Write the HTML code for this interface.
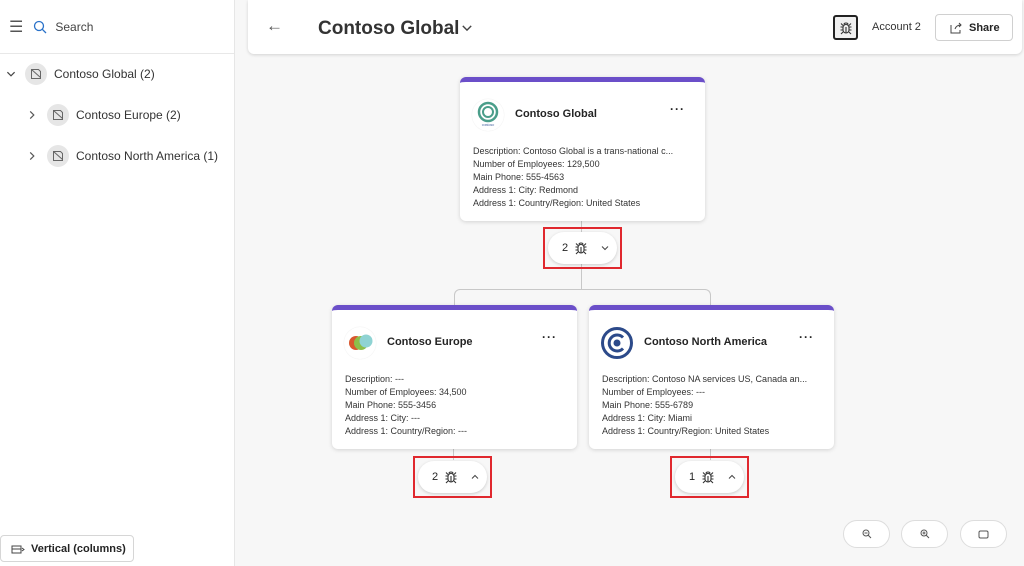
<!DOCTYPE html>
<html><head><meta charset="utf-8"><style>
*{box-sizing:border-box;margin:0;padding:0}
body{width:1024px;height:566px;overflow:hidden;background:#f7f7f7;font-family:"Liberation Sans",sans-serif;color:#242424;position:relative}
.left{position:absolute;left:0;top:0;width:235px;height:566px;background:#fff;border-right:1px solid #e6e6e6}
.lh{height:54px;border-bottom:1px solid #e8e8e8;display:flex;align-items:center;padding-left:9px;font-size:12px;color:#444}
.row{position:absolute;display:flex;align-items:center;font-size:12px;color:#333}
.ic{width:22px;height:22px;border-radius:50%;background:#e6e6e6;display:flex;align-items:center;justify-content:center;margin-right:7px}
.top{position:absolute;left:248px;top:0;width:774px;height:54px;background:#fff;border-radius:0 0 6px 6px;box-shadow:0 1px 3px rgba(0,0,0,.15)}
.card{position:absolute;width:245px;height:144px;background:#fff;border-radius:6px;border-top:5px solid #6b4fc9;box-shadow:0 1px 4px rgba(0,0,0,.15)}
.card .t{position:absolute;left:55px;top:26px;font-size:11px;font-weight:bold}
.card .d{position:absolute;left:13px;top:63px;font-size:9px;line-height:13px;color:#333;white-space:nowrap}
.card .m{position:absolute;right:20px;top:20px;font-size:12px;font-weight:bold;letter-spacing:1px}
.logo{position:absolute;left:12px;top:17px;width:32px;height:32px;border-radius:50%;background:#fff;box-shadow:0 0 1px #ddd}
.badge{position:absolute;border:2px solid #e0282e;width:79px;height:42px}
.pill{position:absolute;left:3px;top:3px;width:69px;height:32px;background:#fff;border-radius:16px;box-shadow:0 1px 3px rgba(0,0,0,.18);font-size:11px;display:flex;align-items:center;padding-left:14px;gap:6px}
.zb{position:absolute;top:520px;width:47px;height:28px;border:1px solid #ddd;border-radius:14px;background:#fff;display:flex;align-items:center;justify-content:center}
.ln{position:absolute;background:#c8c8c8}
</style></head><body>
<svg width="0" height="0" style="position:absolute"><defs><symbol id="bug" viewBox="0 0 14 14"><rect x="4" y="3.5" width="6" height="8.5" rx="3" fill="none" stroke="#333" stroke-width="1.1"/><path d="M5 3.5 C5 1.5 9 1.5 9 3.5 M4 6H1.5M4 9H1.5M10 6h2.5M10 9h2.5M4 4.5L2 2.5M10 4.5L12 2.5M4 11L2 13M10 11l2 2M7 6v6" fill="none" stroke="#333" stroke-width="1.1"/></symbol>
<symbol id="chd" viewBox="0 0 10 10"><path d="M2 3.5l3 3 3-3" fill="none" stroke="#444" stroke-width="1"/></symbol>
<symbol id="chu" viewBox="0 0 10 10"><path d="M2 6.5l3-3 3 3" fill="none" stroke="#444" stroke-width="1"/></symbol>
<symbol id="chr" viewBox="0 0 10 10"><path d="M3.5 2l3 3-3 3" fill="none" stroke="#555" stroke-width="1"/></symbol></defs></svg>
<div class="left">
 <div class="lh"><span style="font-size:16px;color:#555;margin-right:10px">☰</span>
 <svg width="14" height="14" viewBox="0 0 14 14" style="margin-right:8px"><circle cx="6" cy="6" r="4.5" fill="none" stroke="#2a72c9" stroke-width="1.3"/><path d="M9.3 9.3L13 13" stroke="#2a72c9" stroke-width="1.3"/></svg>Search</div>
 <div class="row" style="left:5px;top:63px"><svg width="12" height="12" style="margin-right:8px"><use href="#chd"/></svg><div class="ic"><svg width="12" height="12" viewBox="0 0 12 12"><path d="M1.5 1.5h7l2 2v7h-9z M1.5 1.5l9 8" fill="none" stroke="#666" stroke-width="1"/></svg></div>Contoso Global (2)</div>
 <div class="row" style="left:26px;top:104px"><svg width="12" height="12" style="margin-right:9px"><use href="#chr"/></svg><div class="ic"><svg width="12" height="12" viewBox="0 0 12 12"><path d="M1.5 1.5h7l2 2v7h-9z M1.5 1.5l9 8" fill="none" stroke="#666" stroke-width="1"/></svg></div>Contoso Europe (2)</div>
 <div class="row" style="left:26px;top:145px"><svg width="12" height="12" style="margin-right:9px"><use href="#chr"/></svg><div class="ic"><svg width="12" height="12" viewBox="0 0 12 12"><path d="M1.5 1.5h7l2 2v7h-9z M1.5 1.5l9 8" fill="none" stroke="#666" stroke-width="1"/></svg></div>Contoso North America (1)</div>
 <div style="position:absolute;left:0;top:535px;width:134px;height:27px;border:1px solid #d6d6d6;border-radius:4px;display:flex;align-items:center;padding-left:10px;font-size:11px;font-weight:bold;background:#fff">
 <svg width="14" height="12" viewBox="0 0 14 12" style="margin-right:6px"><rect x="1" y="3" width="9" height="7" fill="none" stroke="#444"/><path d="M1 6h9M11 5l2 1.5-2 1.5" fill="none" stroke="#444"/></svg>Vertical (columns)</div>
</div>
<div class="top">
 <span style="position:absolute;left:18px;top:16px;font-size:17px;color:#555">←</span>
 <span style="position:absolute;left:70px;top:18px;font-size:19px;font-weight:bold;color:#333">Contoso Global</span>
 <svg width="14" height="14" style="position:absolute;left:212px;top:21px"><use href="#chd"/></svg>
 <div style="position:absolute;left:585px;top:15px;width:25px;height:25px;border:2px solid #222;border-radius:3px;background:#f0f0f0;display:flex;align-items:center;justify-content:center"><svg width="14" height="14"><use href="#bug"/></svg></div>
 <span style="position:absolute;left:624px;top:21px;font-size:11px;color:#333">Account 2</span>
 <div style="position:absolute;left:687px;top:14px;width:78px;height:27px;border:1px solid #d0d0d0;border-radius:4px;font-size:11px;font-weight:bold;display:flex;align-items:center;padding-left:14px;gap:6px">
 <svg width="13" height="12" viewBox="0 0 13 12"><path d="M1 3v8h9V8M5 7c1-3 3-4 6-4M9 1l2 2-2 2" fill="none" stroke="#444"/></svg>Share</div>
</div>
<div class="ln" style="left:581px;top:220px;width:1px;height:70px"></div>
<div style="position:absolute;left:454px;top:289px;width:257px;height:20px;border:1px solid #c8c8c8;border-bottom:none;border-radius:6px 6px 0 0"></div>
<div class="ln" style="left:453px;top:448px;width:1px;height:12px"></div>
<div class="ln" style="left:710px;top:448px;width:1px;height:12px"></div>
<div class="card" style="left:460px;top:77px">
 <div class="logo"><svg width="32" height="32" viewBox="0 0 32 32"><circle cx="16" cy="13" r="9" fill="none" stroke="#4a9e8a" stroke-width="2.5"/><circle cx="16" cy="13" r="5" fill="none" stroke="#4a9e8a" stroke-width="2"/><text x="16" y="27" font-size="4" text-anchor="middle" fill="#3a5a9a" font-family="Liberation Serif">contoso</text></svg></div>
 <div class="t">Contoso Global</div><div class="m">···</div>
 <div class="d">Description: Contoso Global is a trans-national c...<br>Number of Employees: 129,500<br>Main Phone: 555-4563<br>Address 1: City: Redmond<br>Address 1: Country/Region: United States</div>
</div>
<div class="card" style="left:332px;top:305px">
 <div class="logo"><svg width="32" height="32" viewBox="0 0 32 32"><circle cx="12" cy="16" r="7" fill="#d9572e"/><circle cx="17" cy="16" r="7" fill="#8cbf4a"/><circle cx="22" cy="14" r="6.5" fill="#8fd3d3"/></svg></div>
 <div class="t">Contoso Europe</div><div class="m">···</div>
 <div class="d">Description: ---<br>Number of Employees: 34,500<br>Main Phone: 555-3456<br>Address 1: City: ---<br>Address 1: Country/Region: ---</div>
</div>
<div class="card" style="left:589px;top:305px">
 <div class="logo" style="box-shadow:none"><svg width="32" height="32" viewBox="0 0 32 32"><circle cx="16" cy="16" r="14.5" fill="none" stroke="#2c4a8a" stroke-width="3"/><path d="M22 10.5A8 8 0 1 0 22 21.5" fill="none" stroke="#2c4a8a" stroke-width="3"/><circle cx="16" cy="16" r="3.5" fill="#2c4a8a"/></svg></div>
 <div class="t">Contoso North America</div><div class="m">···</div>
 <div class="d">Description: Contoso NA services US, Canada an...<br>Number of Employees: ---<br>Main Phone: 555-6789<br>Address 1: City: Miami<br>Address 1: Country/Region: United States</div>
</div>
<div class="badge" style="left:543px;top:227px"><div class="pill">2 <svg width="14" height="14"><use href="#bug"/></svg> <svg width="10" height="10" style="margin-left:6px"><use href="#chd"/></svg></div></div>
<div class="badge" style="left:413px;top:456px"><div class="pill">2 <svg width="14" height="14"><use href="#bug"/></svg> <svg width="10" height="10" style="margin-left:6px"><use href="#chu"/></svg></div></div>
<div class="badge" style="left:670px;top:456px"><div class="pill">1 <svg width="14" height="14"><use href="#bug"/></svg> <svg width="10" height="10" style="margin-left:6px"><use href="#chu"/></svg></div></div>
<div class="zb" style="left:843px"><svg width="10" height="10" viewBox="0 0 10 10"><circle cx="4" cy="4" r="3" fill="none" stroke="#555"/><path d="M2.5 4h3M6 6l3 3" stroke="#555"/></svg></div>
<div class="zb" style="left:901px"><svg width="10" height="10" viewBox="0 0 10 10"><circle cx="4" cy="4" r="3" fill="none" stroke="#555"/><path d="M2.5 4h3M4 2.5v3M6 6l3 3" stroke="#555"/></svg></div>
<div class="zb" style="left:960px"><svg width="11" height="9" viewBox="0 0 11 9"><rect x="1" y="1" width="9" height="7" rx="1.5" fill="none" stroke="#555"/></svg></div>
</body></html>
